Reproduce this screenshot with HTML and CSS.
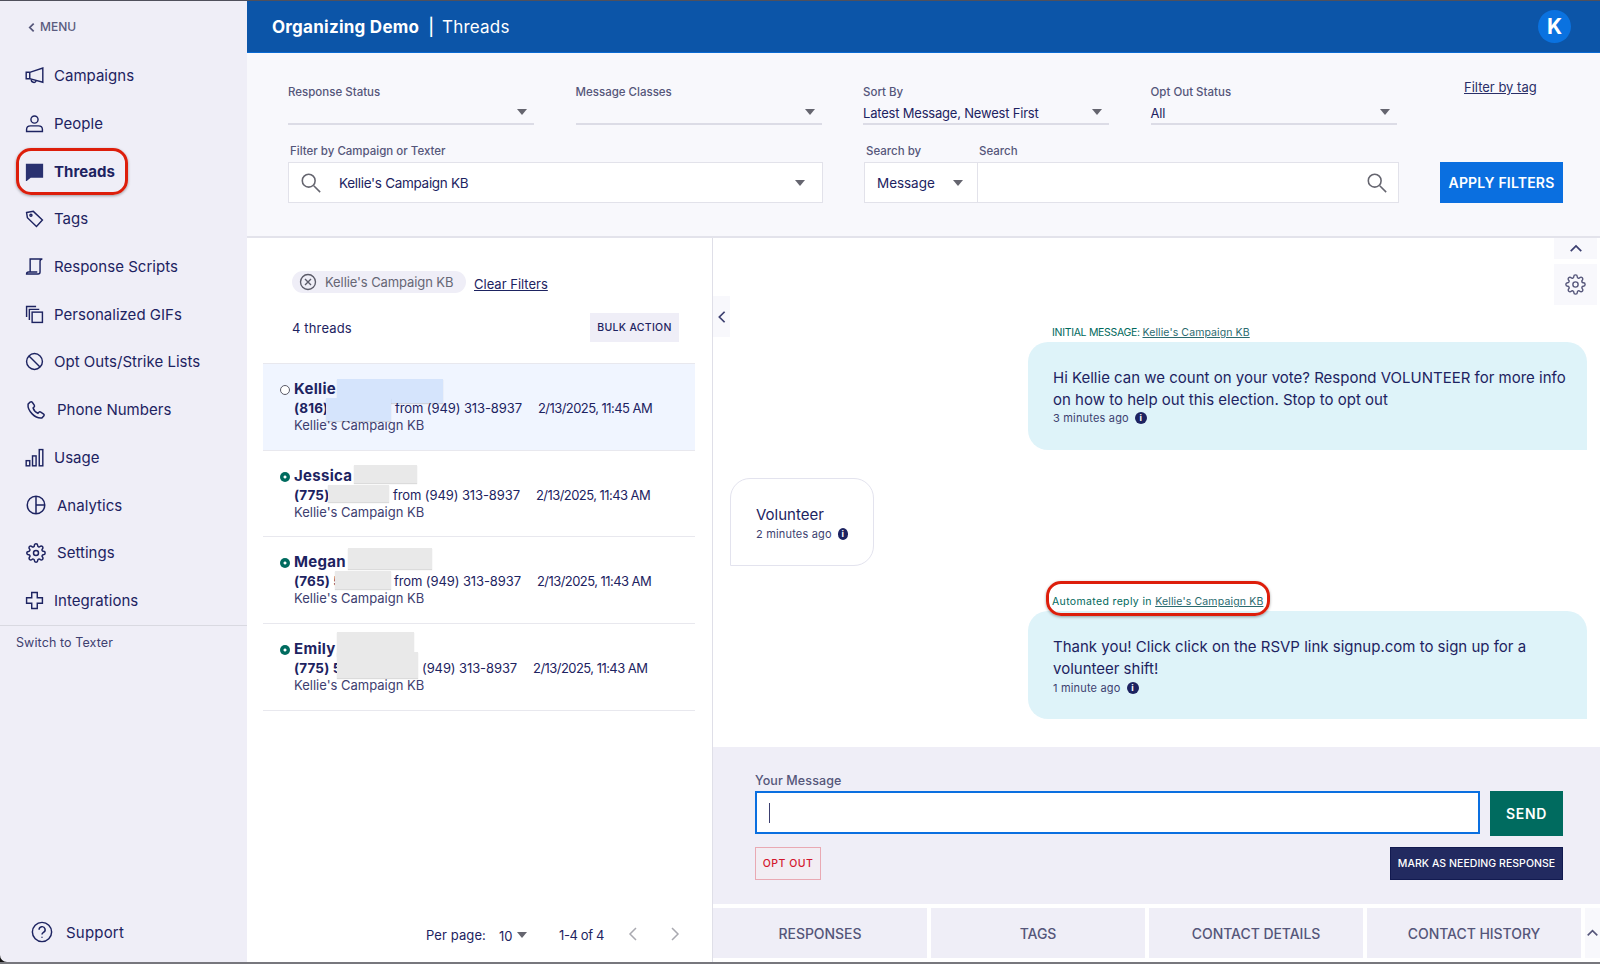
FILE: index.html
```html
<!DOCTYPE html>
<html lang="en">
<head>
<meta charset="utf-8">
<title>Threads</title>
<link rel="stylesheet" href="styles.css">
</head>
<body>
<div class="app">
  <aside class="sidebar">
    <div class="menu-back"><svg class="chev" viewBox="0 0 8 12"><path d="M6.500 1.500 2 6l4.500 4.500"/></svg>MENU</div>
    <nav class="nav">
      <a class="nav-item"><svg class="ico" viewBox="0 0 24 24"><path d="M1.500 8H6l16.500-5.500v18L6 16H1.500z"/><path d="M6 8v8M8 17a3.200 3.200 0 0 0 6.200 1.500"/></svg><span>Campaigns</span></a>
      <a class="nav-item"><svg class="ico" viewBox="0 0 24 24"><circle cx="12" cy="7" r="4.500"/><path d="M2 22v-2.500C2 16.500 4.500 15 7 15h10c2.500 0 5 1.500 5 4.500V22z"/></svg><span>People</span></a>
      <a class="nav-item nav-active"><svg class="ico" viewBox="0 0 24 24"><path class="solid" d="M2 3h20v16H7l-5 4z"/></svg><span>Threads</span></a>
      <a class="nav-item"><svg class="ico" viewBox="0 0 24 24"><path d="M2 4.500 10.500 3 22 14l-7.500 8L3 11z"/><circle cx="7.500" cy="8" r="1.300"/></svg><span>Tags</span></a>
      <a class="nav-item"><svg class="ico" viewBox="0 0 24 24"><path d="M6.500 19V2.500H22c-2 0-3 1-3 3V19c0 1.500-1 2.500-2.500 2.500H2c0-1.500 1-2.500 2.500-2.500h11"/></svg><span>Response Scripts</span></a>
      <a class="nav-item"><svg class="ico" viewBox="0 0 24 24"><path d="M2 15V2h12M5.500 19V5.500H18"/><rect x="9" y="9" width="13" height="13"/></svg><span>Personalized GIFs</span></a>
      <a class="nav-item"><svg class="ico" viewBox="0 0 24 24"><circle cx="12" cy="12" r="10"/><path d="m5 5 14 14"/></svg><span>Opt Outs/Strike Lists</span></a>
      <a class="nav-item nav-wide"><svg class="ico" viewBox="0 0 24 24"><path d="M5 2.500 2.500 5c-1 8 8.500 17.500 16.500 16.500l2.500-2.500c.5-.8.300-1.700-.3-2.200l-3.500-2.300c-.8-.5-1.600-.4-2.200.2l-1.200 1.200C11 14.500 9.500 12.500 8.500 9.500l1.200-1.200c.6-.6.700-1.400.2-2.200L7.500 2.700C6.900 2 5.800 2 5 2.500z"/></svg><span>Phone Numbers</span></a>
      <a class="nav-item"><svg class="ico" viewBox="0 0 24 24"><rect x="1.500" y="16" width="4.500" height="6.500"/><rect x="9.500" y="10" width="4.500" height="12.500"/><rect x="18" y="2" width="4.500" height="20.500"/></svg><span>Usage</span></a>
      <a class="nav-item nav-wide"><svg class="ico" viewBox="0 0 24 24"><circle cx="12" cy="12" r="10.500"/><path d="M12 1.500v21M12 12h10.500"/></svg><span>Analytics</span></a>
      <a class="nav-item nav-wide"><svg class="ico" viewBox="0 0 24 24"><circle cx="12" cy="12" r="3"/><path d="M19.400 15a1.650 1.650 0 0 0 .33 1.820l.06.06a2 2 0 0 1 0 2.830 2 2 0 0 1-2.830 0l-.06-.06a1.650 1.650 0 0 0-1.820-.33 1.650 1.650 0 0 0-1 1.510V21a2 2 0 0 1-2 2 2 2 0 0 1-2-2v-.09A1.650 1.650 0 0 0 9 19.400a1.650 1.650 0 0 0-1.820.33l-.06.06a2 2 0 0 1-2.830 0 2 2 0 0 1 0-2.830l.06-.06a1.650 1.650 0 0 0 .33-1.820 1.650 1.650 0 0 0-1.510-1H3a2 2 0 0 1-2-2 2 2 0 0 1 2-2h.09A1.650 1.650 0 0 0 4.600 9a1.650 1.650 0 0 0-.33-1.820l-.06-.06a2 2 0 0 1 0-2.830 2 2 0 0 1 2.830 0l.06.06a1.650 1.650 0 0 0 1.820.33H9a1.650 1.650 0 0 0 1-1.510V3a2 2 0 0 1 2-2 2 2 0 0 1 2 2v.09a1.650 1.650 0 0 0 1 1.510 1.650 1.650 0 0 0 1.820-.33l.06-.06a2 2 0 0 1 2.830 0 2 2 0 0 1 0 2.830l-.06.06a1.650 1.650 0 0 0-.33 1.820V9a1.650 1.650 0 0 0 1.510 1H21a2 2 0 0 1 2 2 2 2 0 0 1-2 2h-.09a1.650 1.650 0 0 0-1.510 1z"/></svg><span>Settings</span></a>
      <a class="nav-item"><svg class="ico" viewBox="0 0 24 24"><path d="M8.500 2h7v6.500H22v7h-6.500V22h-7v-6.500H2v-7h6.500z"/></svg><span>Integrations</span></a>
    </nav>
    <div class="switch">Switch to Texter</div>
    <a class="support"><svg class="ico-lg" viewBox="0 0 24 24"><circle cx="12" cy="12" r="10.500"/><path d="M8.800 9.500a3.300 3.300 0 1 1 4.800 2.900c-1 .6-1.600 1.200-1.600 2.400M12 17.200v1"/></svg><span>Support</span></a>
    <div class="ring ring-threads"></div>
  </aside>

  <main class="main">
    <header class="topbar">
      <div class="crumbs"><b>Organizing Demo</b><span class="pipe">|</span><span>Threads</span></div>
      <div class="avatar">K</div>
    </header>

    <section class="filters">
      <div class="filter-row">
        <div class="select"><label>Response Status</label><div class="select-value"><i class="caret"></i></div></div>
        <div class="select"><label>Message Classes</label><div class="select-value"><i class="caret"></i></div></div>
        <div class="select"><label>Sort By</label><div class="select-value"><span>Latest Message, Newest First</span><i class="caret"></i></div></div>
        <div class="select"><label>Opt Out Status</label><div class="select-value"><span>All</span><i class="caret"></i></div></div>
        <a class="tag-link">Filter by tag</a>
      </div>
      <div class="filter-row filter-row-2">
        <div class="box-field">
          <label class="box-label">Filter by Campaign or Texter</label>
          <div class="box">
            <svg class="search" viewBox="0 0 24 24"><circle cx="9.500" cy="9.500" r="7"/><path d="m15 15 7 7"/></svg>
            <span class="box-text">Kellie's Campaign KB</span><i class="caret caret-end"></i>
          </div>
        </div>
        <div class="box-field search-field">
          <div class="box-labels"><label>Search by</label><label>Search</label></div>
          <div class="box">
            <div class="search-by"><span>Message</span><i class="caret"></i></div>
            <div class="search-input"><svg class="search" viewBox="0 0 24 24"><circle cx="9.500" cy="9.500" r="7"/><path d="m15 15 7 7"/></svg></div>
          </div>
        </div>
        <button class="apply">APPLY FILTERS</button>
      </div>
    </section>

    <div class="content">
      <section class="threads">
        <div class="chips">
          <span class="chip"><svg class="chip-x" viewBox="0 0 24 24"><circle cx="12" cy="12" r="10"/><path d="m8 8 8 8M16 8l-8 8"/></svg>Kellie's Campaign KB</span>
          <a class="clear">Clear Filters</a>
        </div>
        <div class="count-row"><span>4 threads</span><button class="bulk">BULK ACTION</button></div>
        <ul class="thread-list">
          <li class="thread thread-selected">
            <i class="dot dot-open"></i>
            <div class="t-name">Kellie</div>
            <div class="t-line"><b class="num num-1">(816)</b><span>from (949) 313-8937</span><span class="t-date">2/13/2025, 11:45 AM</span></div>
            <div class="t-camp">Kellie's Campaign KB</div>
            <i class="blur blur-blue b1a"></i><i class="blur blur-blue b1b"></i>
          </li>
          <li class="thread">
            <i class="dot"></i>
            <div class="t-name">Jessica</div>
            <div class="t-line"><b class="num num-2">(775)</b><span>from (949) 313-8937</span><span class="t-date">2/13/2025, 11:43 AM</span></div>
            <div class="t-camp">Kellie's Campaign KB</div>
            <i class="blur b2a"></i><i class="blur b2b"></i>
          </li>
          <li class="thread">
            <i class="dot"></i>
            <div class="t-name">Megan</div>
            <div class="t-line"><b class="num num-3">(765) 5</b><span>from (949) 313-8937</span><span class="t-date">2/13/2025, 11:43 AM</span></div>
            <div class="t-camp">Kellie's Campaign KB</div>
            <i class="blur b3a"></i><i class="blur b3b"></i>
          </li>
          <li class="thread">
            <i class="dot"></i>
            <div class="t-name">Emily</div>
            <div class="t-line"><b class="num num-4">(775) 5</b><span>(949) 313-8937</span><span class="t-date">2/13/2025, 11:43 AM</span></div>
            <div class="t-camp">Kellie's Campaign KB</div>
            <i class="blur b4a"></i><i class="blur b4b"></i>
          </li>
        </ul>
        <div class="pager">
          <span>Per page:</span><span class="pp">10</span><i class="caret"></i><span class="range">1-4 of 4</span>
          <svg class="pg" viewBox="0 0 10 16"><path d="M8 2 2 8l6 6"/></svg>
          <svg class="pg" viewBox="0 0 10 16"><path d="m2 2 6 6-6 6"/></svg>
        </div>
      </section>

      <section class="convo">
        <div class="messages">
          <button class="tab-collapse"><svg viewBox="0 0 10 16"><path d="M8 2 2 8l6 6"/></svg></button>
          <div class="tools">
            <button class="tool tool-up"><svg viewBox="0 0 16 10"><path d="m2 8 6-6 6 6"/></svg></button>
            <button class="tool tool-gear"><svg viewBox="0 0 24 24"><circle cx="12" cy="12" r="3"/><path d="M19.400 15a1.650 1.650 0 0 0 .33 1.820l.06.06a2 2 0 0 1 0 2.830 2 2 0 0 1-2.830 0l-.06-.06a1.650 1.650 0 0 0-1.820-.33 1.650 1.650 0 0 0-1 1.510V21a2 2 0 0 1-2 2 2 2 0 0 1-2-2v-.09A1.650 1.650 0 0 0 9 19.400a1.650 1.650 0 0 0-1.820.33l-.06.06a2 2 0 0 1-2.830 0 2 2 0 0 1 0-2.830l.06-.06a1.650 1.650 0 0 0 .33-1.820 1.650 1.650 0 0 0-1.510-1H3a2 2 0 0 1-2-2 2 2 0 0 1 2-2h.09A1.650 1.650 0 0 0 4.600 9a1.650 1.650 0 0 0-.33-1.820l-.06-.06a2 2 0 0 1 0-2.830 2 2 0 0 1 2.830 0l.06.06a1.650 1.650 0 0 0 1.820.33H9a1.650 1.650 0 0 0 1-1.510V3a2 2 0 0 1 2-2 2 2 0 0 1 2 2v.09a1.650 1.650 0 0 0 1 1.510 1.650 1.650 0 0 0 1.820-.33l.06-.06a2 2 0 0 1 2.830 0 2 2 0 0 1 0 2.830l-.06.06a1.650 1.650 0 0 0-.33 1.820V9a1.650 1.650 0 0 0 1.510 1H21a2 2 0 0 1 2 2 2 2 0 0 1-2 2h-.09a1.650 1.650 0 0 0-1.510 1z"/></svg></button>
          </div>
          <div class="msg-out">
            <div class="meta meta-caps">INITIAL MESSAGE: <a>Kellie's Campaign KB</a></div>
            <div class="bubble">
              <p>Hi Kellie can we count on your vote? Respond VOLUNTEER for more info on how to help out this election. Stop to opt out</p>
              <div class="when">3 minutes ago<i class="info">i</i></div>
            </div>
          </div>
          <div class="bubble-in">
            <p>Volunteer</p>
            <div class="when">2 minutes ago<i class="info">i</i></div>
          </div>
          <div class="msg-out msg-auto">
            <div class="meta meta-auto">Automated reply in <a>Kellie's Campaign KB</a><div class="ring ring-auto"></div></div>
            <div class="bubble bubble-2">
              <p>Thank you! Click click on the RSVP link signup.com to sign up for a volunteer shift!</p>
              <div class="when">1 minute ago<i class="info">i</i></div>
            </div>
          </div>
        </div>
        <div class="compose">
          <label class="compose-label">Your Message</label>
          <div class="compose-row">
            <div class="compose-input"><i class="cursor"></i></div>
            <button class="send">SEND</button>
          </div>
          <div class="compose-actions">
            <button class="opt">OPT OUT</button>
            <button class="mark">MARK AS NEEDING RESPONSE</button>
          </div>
        </div>
        <div class="tabs">
          <button class="tab">RESPONSES</button>
          <button class="tab">TAGS</button>
          <button class="tab">CONTACT DETAILS</button>
          <button class="tab">CONTACT HISTORY</button>
          <button class="tab-more"><svg viewBox="0 0 16 10"><path d="m2 8 6-6 6 6"/></svg></button>
        </div>
      </section>
    </div>
  </main>
</div>
</body>
</html>
```
FILE: styles.css
```css
* { box-sizing: border-box; }
html, body { margin: 0; height: 964px; overflow: hidden; }
body {
  font-family: Inter, "Open Sans", "Liberation Sans", sans-serif;
  color: #1d2361;
  background: #fff;
}
button { font-family: inherit; border: 0; cursor: pointer; padding: 0; }
label { display: block; }
p { margin: 0; }
a { color: inherit; }
ul { list-style: none; margin: 0; padding: 0; }
i { font-style: normal; }
svg { display: block; fill: none; stroke: currentColor; }

.app {
  display: flex;
  height: 964px;
  background: #111;
  border-top: 1px solid #50505c;
  border-bottom: 2px solid #77777d;
}

/* Sidebar */
.sidebar {
  position: relative;
  width: 247px;
  flex: none;
  display: flex;
  flex-direction: column;
  background: #efeef7;
  border-bottom-left-radius: 7px;
}
.menu-back {
  height: 51px;
  padding: 19px 0 0 28px;
  display: flex;
  align-items: flex-start;
  gap: 5px;
  font-size: 12px;
  line-height: 14px;
  font-weight: 500;
  color: #5a5b7e;
}
.chev { width: 7px; height: 11px; margin-top: 2px; stroke-width: 2; color: #55567a; }
.nav { border-bottom: 1px solid #d9d9e1; padding-bottom: 1px; }
.nav-item {
  height: 47.700px;
  display: flex;
  align-items: center;
  gap: 10px;
  padding-left: 25px;
  font-size: 15px;
  letter-spacing: .02px;
}
.nav-wide { gap: 11px; padding-left: 26px; }
.nav-wide .ico { width: 20px; height: 20px; }
.nav-active { font-weight: 700; }
.ico { width: 19px; height: 19px; stroke-width: 1.800; flex: none; }
.solid { fill: #2a3170; stroke: #2a3170; }
.switch { padding: 9px 0 0 16px; font-size: 12.500px; line-height: 16px; color: #3e4070; letter-spacing: .1px; }
.support {
  margin-top: auto;
  padding: 0 0 19px 31px;
  display: flex;
  align-items: center;
  gap: 13px;
  font-size: 15px;
  letter-spacing: .2px;
}
.ico-lg { width: 22px; height: 22px; stroke-width: 1.600; flex: none; }
.ring {
  position: absolute;
  border: 3px solid #dd1e0b;
  border-radius: 15px;
  box-shadow: 0 1px 3px rgba(0, 0, 0, .35);
  pointer-events: none;
}
.ring-threads { left: 16px; top: 147px; width: 112px; height: 47px; }

/* Main */
.main { flex: 1; min-width: 0; display: flex; flex-direction: column; background: #fff; }
.topbar {
  height: 52px;
  flex: none;
  display: flex;
  align-items: center;
  justify-content: space-between;
  padding: 0 29px 0 25px;
  background: #0c55a8;
  border-bottom: 1px solid #0a6ad2;
  color: #fff;
  font-size: 17px;
}
.crumbs { display: flex; align-items: center; }
.crumbs b { font-size: 17px; font-weight: 700; letter-spacing: .25px; }
.crumbs span:last-child { letter-spacing: .2px; }
.pipe { margin: 0 8px 0 9px; font-weight: 500; }
.avatar {
  width: 33px;
  height: 33px;
  border-radius: 50%;
  background: #0a72e0;
  display: flex;
  align-items: center;
  justify-content: center;
  font-weight: 700;
  font-size: 21px;
}

/* Filters */
.filters {
  height: 185px;
  flex: none;
  padding: 31px 0 0 41px;
  background: #f8f8fc;
  border-bottom: 2px solid #e3e3eb;
}
.filter-row { display: flex; align-items: flex-start; }
.filter-row-2 { margin-top: 18px; align-items: flex-end; }
.select { width: 246px; margin-right: 41.500px; flex: none; }
.select label, .box-field label {
  font-size: 11.500px;
  line-height: 16px;
  font-weight: 500;
  color: #55567a;
}
.select-value {
  height: 25px;
  display: flex;
  align-items: center;
  justify-content: space-between;
  font-size: 13px;
  letter-spacing: -.2px;
  padding-top: 2px;
  border-bottom: 2px solid #dcdce6;
}
.select-value .caret { margin: 0 7px 2px auto; }
.caret {
  flex: none;
  display: inline-block;
  width: 0;
  height: 0;
  border-left: 5.500px solid transparent;
  border-right: 5.500px solid transparent;
  border-top: 6px solid #65656f;
}
.tag-link {
  margin: -5px 0 0 26px;
  font-size: 13px;
  line-height: 16px;
  text-decoration: underline;
  color: #2a2f68;
}
.box-field { width: 535px; flex: none; }
.box-label { padding-left: 2px; margin-bottom: 3px; }
.box-labels { display: flex; padding-left: 2px; margin-bottom: 3px; }
.box-labels label { width: 113px; }
.search-field { margin-left: 41px; }
.box {
  height: 41px;
  display: flex;
  align-items: center;
  background: #fff;
  border: 1.500px solid #e2e2ea;
}
.search { width: 22px; height: 22px; stroke-width: 1.700; color: #65656f; flex: none; }
.box > .search { margin-left: 11px; }
.box-text { margin-left: 17px; font-size: 13.500px; letter-spacing: -.3px; flex: 1; }
.caret-end { margin-right: 17px; }
.search-by {
  width: 113px;
  height: 100%;
  flex: none;
  display: flex;
  align-items: center;
  justify-content: space-between;
  padding: 0 14px 0 12px;
  border-right: 1.500px solid #e2e2ea;
  font-size: 13.500px;
  letter-spacing: -.05px;
}
.search-input { flex: 1; display: flex; justify-content: flex-end; padding-right: 10px; }
.apply {
  width: 123px;
  height: 41px;
  margin-left: 41px;
  flex: none;
  background: #0a6fe0;
  color: #fff;
  font-size: 14px;
  font-weight: 600;
  letter-spacing: .2px;
}

/* Content */
.content { flex: 1; min-height: 0; display: flex; }
.threads {
  width: 466px;
  flex: none;
  display: flex;
  flex-direction: column;
  padding: 33px 17px 0 16px;
  border-right: 1.500px solid #dfdfe8;
}
.chips { display: flex; align-items: flex-start; padding-left: 29px; gap: 8px; }
.chip {
  height: 22px;
  width: 174px;
  display: flex;
  align-items: center;
  gap: 8px;
  padding-left: 7px;
  border-radius: 11px;
  background: #efeef7;
  color: #666675;
  font-size: 13px;
  letter-spacing: -.1px;
  white-space: nowrap;
}
.chip-x { width: 18px; height: 18px; stroke-width: 1.800; color: #5b5b68; flex: none; }
.clear { margin-top: 5px; font-size: 13px; line-height: 16px; text-decoration: underline; }
.count-row {
  margin-top: 20px;
  padding: 0 16px 0 29px;
  display: flex;
  align-items: center;
  justify-content: space-between;
  font-size: 13px;
  letter-spacing: .15px;
}
.bulk {
  width: 89px;
  height: 29px;
  background: #efeef7;
  color: #1d2361;
  font-size: 10.500px;
  font-weight: 500;
  letter-spacing: .3px;
}
.thread-list { margin-top: 21px; border-top: 1.500px solid #e8e8ee; }
.thread {
  position: relative;
  height: 86.700px;
  padding: 15px 0 0 31px;
  border-bottom: 1.500px solid #e8e8ee;
}
.thread-selected { background: #f0f5ff; }
.dot {
  position: absolute;
  left: 17px;
  top: 21px;
  width: 10px;
  height: 10px;
  border-radius: 50%;
  background: radial-gradient(circle, #fff 0 1.200px, #006b5f 1.800px);
}
.dot-open { background: #fff; border: 1.500px solid #5b5b68; }
.t-name { font-size: 15px; line-height: 20px; font-weight: 700; letter-spacing: .3px; }
.t-line { display: flex; font-size: 13px; line-height: 18px; letter-spacing: -.1px; white-space: nowrap; }
.t-line b { font-weight: 700; font-size: 13.500px; letter-spacing: .15px; overflow: hidden; }
.t-date { margin-left: 16px; letter-spacing: -.55px; }
.num-1 { width: 101px; }
.num-2 { width: 99px; }
.num-3 { width: 100px; }
.num-4 { width: 128px; }
.t-camp { font-size: 13px; line-height: 16px; letter-spacing: 0; color: #3d4070; }
.blur { position: absolute; background: #e9e9e9; box-shadow: 0 1px 1px rgba(0, 0, 0, .14); }
.blur-blue { background: #d5e4fc; }
.b1a { left: 74px; top: 15px; width: 106px; height: 24px; }
.b1b { left: 63px; top: 34px; width: 65px; height: 23px; }
.b2a { left: 91px; top: 14px; width: 63px; height: 18px; }
.b2b { left: 65px; top: 34px; width: 61px; height: 17px; }
.b3a { left: 85px; top: 11px; width: 84px; height: 21px; }
.b3b { left: 72px; top: 34px; width: 56px; height: 18px; }
.b4a { left: 74px; top: 8px; width: 77px; height: 24px; }
.b4b { left: 74px; top: 28px; width: 81px; height: 26px; }
.pager {
  margin-top: auto;
  height: 36px;
  padding: 0 0 0 163px;
  display: flex;
  align-items: flex-start;
  font-size: 13px;
  line-height: 18px;
  letter-spacing: .1px;
}
.pp { margin-left: 13px; width: 16px; padding-top: 1px; }
.pager .caret { margin: 6px 0 0 2px; }
.range { margin-left: 32px; letter-spacing: -.35px; }
.pg { width: 10px; height: 16px; stroke-width: 1.500; color: #a9a9b0; }
.range + .pg { margin-left: 24px; }
.pg + .pg { margin-left: 32px; }

/* Conversation */
.convo { flex: 1; min-width: 0; display: flex; flex-direction: column; }
.messages { position: relative; flex: 1; min-height: 0; padding: 88px 13px 0 17px; }
.tab-collapse {
  position: absolute;
  left: 0;
  top: 58px;
  width: 17px;
  height: 41px;
  background: #f8f8fc;
  color: #3c3f70;
  display: flex;
  align-items: center;
  justify-content: center;
}
.tab-collapse svg { width: 10px; height: 14px; stroke-width: 2; }
.tools { position: absolute; right: 3px; top: 0; display: flex; flex-direction: column; gap: 5px; }
.tool { width: 43px; background: #f8f8fc; color: #3c3f70; display: flex; align-items: center; justify-content: center; }
.tool-up { height: 21px; }
.tool-up svg { width: 14px; height: 9px; stroke-width: 2; }
.tool-gear { height: 41px; }
.tool-gear svg { width: 21px; height: 21px; stroke-width: 1.600; color: #55567a; }
.msg-out { margin-left: 298px; }
.meta {
  position: relative;
  height: 16px;
  padding-left: 24px;
  font-size: 10.500px;
  line-height: 14px;
  color: #00695c;
  white-space: nowrap;
}
.meta-caps { letter-spacing: -.3px; }
.meta-caps a { letter-spacing: .1px; }
.meta-auto { height: 17px; padding-top: 1px; letter-spacing: .35px; }
.meta-auto a { letter-spacing: .15px; }
.meta a { text-decoration: underline; color: #2b6b70; }
.bubble {
  height: 108px;
  padding: 25px 20px 0 25px;
  background: #def3f9;
  border-radius: 20px 20px 0 20px;
}
.bubble p { font-size: 15px; line-height: 22px; }
.when { display: flex; align-items: center; gap: 6px; font-size: 11px; line-height: 16px; letter-spacing: .18px; color: #3c3f70; white-space: nowrap; }
.bubble .when { margin-top: -1px; }
.bubble-2 .when { margin-top: 0; }
.info {
  width: 12px;
  height: 12px;
  border-radius: 50%;
  background: #1d2361;
  color: #fff;
  font-size: 9px;
  line-height: 12px;
  font-weight: 700;
  text-align: center;
}
.bubble-in {
  width: 144px;
  height: 88px;
  margin-top: 28px;
  padding: 25px 25px 0;
  background: #fff;
  border: 1.500px solid #e3e3ee;
  border-radius: 20px 20px 20px 0;
}
.bubble-in p { font-size: 15px; line-height: 22px; }
.msg-auto { margin-top: 28px; }
.bubble-2 { height: 108px; }
.ring-auto { left: 18px; top: -13px; width: 224px; height: 35px; }

.compose { height: 157px; flex: none; padding: 26px 37px 0 42px; background: #efeef7; }
.compose-label { font-size: 12.500px; line-height: 16px; font-weight: 500; color: #55567a; letter-spacing: .1px; }
.compose-row { margin-top: 2px; display: flex; justify-content: space-between; align-items: flex-start; }
.compose-input { width: 725px; height: 43px; background: #fff; border: 2px solid #0a6fe0; display: flex; align-items: center; padding-left: 12px; }
.cursor { width: 1px; height: 20px; background: #3c3f70; }
.send { width: 73px; height: 45px; background: #006b5f; color: #fff; font-size: 14px; font-weight: 600; letter-spacing: .7px; }
.compose-actions { margin-top: 11px; display: flex; justify-content: space-between; }
.opt { width: 66px; height: 33px; background: #f2edf3; border: 1.500px solid #e9a9b3; color: #d3162d; font-size: 10.500px; font-weight: 500; letter-spacing: .5px; }
.mark { width: 173px; height: 33px; background: #222a60; border: 1px solid #121a50; color: #fff; font-size: 10.500px; font-weight: 500; letter-spacing: .05px; }
.tabs { height: 58px; flex: none; padding: 4px 0; display: flex; gap: 4px; }
.tab { width: 214px; height: 50px; background: #efeef7; color: #55567a; font-size: 14px; font-weight: 500; letter-spacing: -.05px; }
.tab-more { flex: 1; height: 50px; background: #f8f8fc; color: #55567a; display: flex; align-items: center; justify-content: center; }
.tab-more svg { width: 13px; height: 8px; stroke-width: 2; }
```
